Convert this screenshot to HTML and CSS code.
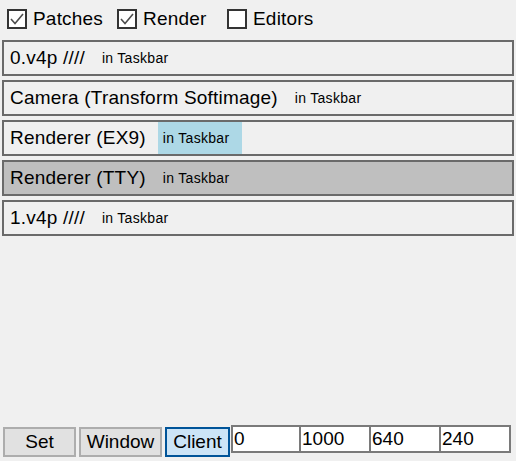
FILE: index.html
```html
<!DOCTYPE html>
<html>
<head>
<meta charset="utf-8">
<link rel="stylesheet" href="styles.css">
</head>
<body>
<div class="top">
  <label class="check"><span class="box"><svg viewBox="0 0 20 20" width="20" height="20"><polyline points="4,10 8,14.5 16,5" fill="none" stroke="#4d4d4d" stroke-width="1.6"/></svg></span><span class="ctext">Patches</span></label>
  <label class="check"><span class="box"><svg viewBox="0 0 20 20" width="20" height="20"><polyline points="4,10 8,14.5 16,5" fill="none" stroke="#4d4d4d" stroke-width="1.6"/></svg></span><span class="ctext">Render</span></label>
  <label class="check"><span class="box"></span><span class="ctext">Editors</span></label>
</div>
<div class="list">
  <div class="row"><span class="name">0.v4p ////</span><span class="tb">in Taskbar</span></div>
  <div class="row"><span class="name">Camera (Transform Softimage)</span><span class="tb">in Taskbar</span></div>
  <div class="row"><span class="name">Renderer (EX9)</span><span class="tb hl">in Taskbar</span></div>
  <div class="row sel"><span class="name">Renderer (TTY)</span><span class="tb">in Taskbar</span></div>
  <div class="row"><span class="name">1.v4p ////</span><span class="tb">in Taskbar</span></div>
</div>
<div class="bottom">
  <button class="btn set">Set</button>
  <button class="btn win">Window</button>
  <button class="btn client">Client</button>
  <div class="fields">
    <input class="field" value="0">
    <input class="field" value="1000">
    <input class="field" value="640">
    <input class="field" value="240">
  </div>
</div>
</body>
</html>
```
FILE: styles.css
```css
html, body { margin: 0; padding: 0; }
body {
  width: 516px;
  height: 461px;
  background: #f0f0f0;
  font-family: "Liberation Sans", Arial, sans-serif;
  color: #000;
  display: flex;
  flex-direction: column;
  overflow: hidden;
}
.top {
  height: 38px;
  display: flex;
  align-items: center;
  padding-left: 7px;
  box-sizing: border-box;
}
.check {
  display: flex;
  align-items: center;
  width: 110px;
}
.box {
  width: 20px;
  height: 20px;
  box-sizing: border-box;
  border: 2px solid #333;
  background: #fff;
  position: relative;
  overflow: hidden;
}
.box svg { position: absolute; left: -2px; top: -2px; }
.ctext {
  font-size: 19px;
  margin-left: 6px;
  line-height: 20px;
  letter-spacing: 0.2px;
}
.list {
  margin-top: 2px;
  padding: 0 2px;
  display: flex;
  flex-direction: column;
  gap: 4px;
  flex: 1;
}
.row {
  height: 36px;
  box-sizing: border-box;
  border: 2px solid #6a6a6a;
  background: #f0f0f0;
  display: flex;
  align-items: stretch;
}
.row.sel { background: #bfbfbf; }
.name {
  font-size: 19px;
  letter-spacing: 0.2px;
  padding: 0 12px 0 6px;
  display: flex;
  align-items: center;
}
.tb {
  font-size: 14px;
  letter-spacing: 0.3px;
  padding: 0 13px 0 5px;
  display: flex;
  align-items: center;
}
.tb.hl { background: #add8e6; }
.bottom {
  height: 36px;
  display: flex;
  align-items: flex-start;
  padding-left: 3px;
}
.btn {
  margin-top: 2px;
  height: 30px;
  box-sizing: border-box;
  border: 2px solid #adadad;
  background: #e1e1e1;
  font-family: "Liberation Sans", Arial, sans-serif;
  font-size: 19px;
  color: #000;
  padding: 0;
  margin-right: 3px;
}
.btn.set { width: 73px; }
.btn.win { width: 83px; }
.btn.client {
  width: 65px;
  margin-right: 1px;
  background: #cce4f7;
  border-color: #005499;
}
.fields { display: flex; }
.field {
  width: 70px;
  height: 28px;
  box-sizing: border-box;
  border: 2px solid #7a7a7a;
  background: #fff;
  font-family: "Liberation Sans", Arial, sans-serif;
  font-size: 19px;
  padding: 0 0 0 1px;
  margin: 0;
  color: #000;
  outline: none;
}
.field + .field { border-left: none; }
```
